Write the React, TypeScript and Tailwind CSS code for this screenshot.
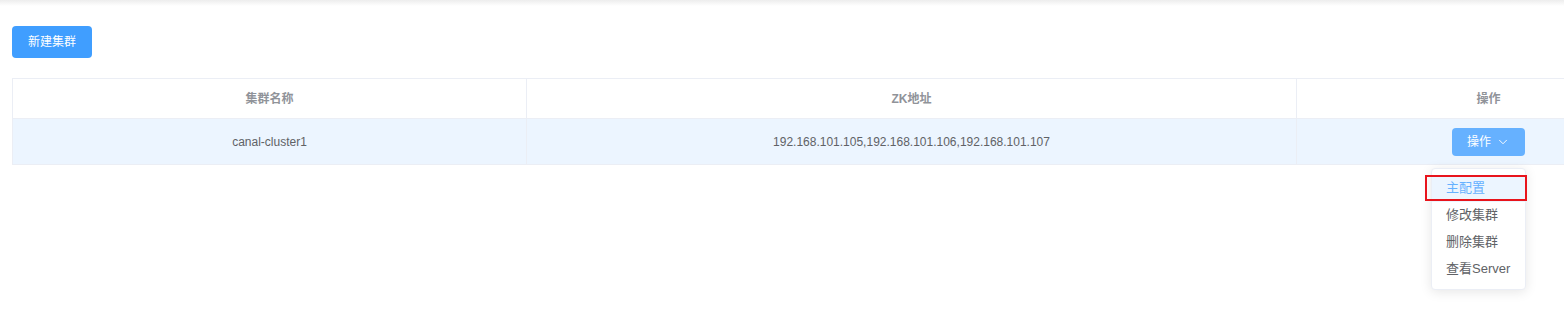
import { ChevronDown } from "lucide-react"

const font = { fontFamily: '"Liberation Sans", "Noto Sans CJK SC", sans-serif' }

const menuItems = ["主配置", "修改集群", "删除集群", "查看Server"]

function ActionDropdown() {
  return (
    <div className="absolute left-[1431px] top-[168px] w-[95px] rounded bg-white border border-[#ebeef5] shadow-[0_2px_12px_0_rgba(0,0,0,0.1)] py-[6px]">
      {menuItems.map((item, idx) => (
        <div
          key={item}
          className={`h-[27px] leading-[26px] px-[14px] text-[13px] whitespace-nowrap ${idx === 0 ? 'bg-[#ecf5ff] text-[#66b1ff]' : 'text-[#606266]'}`}
        >
          {item}
        </div>
      ))}
      {/* 标注框 */}
      <div className="absolute left-[-7px] top-[6px] w-[102px] h-[26px] border-2 border-[#e8141c] pointer-events-none" />
    </div>
  )
}

export default function App() {
  return (
    <div className="relative w-[1564px] h-[319px] overflow-hidden bg-white" style={font}>
      <div className="h-[6px] bg-gradient-to-b from-[#ededed] to-white" />

      <div className="pl-3 pt-5">
        <button className="h-8 w-20 rounded bg-[#409eff] text-white text-xs">新建集群</button>
      </div>

      <div className="pl-3 pt-5">
        <table className="w-[1668px] table-fixed border-collapse border border-[#ebeef5] text-xs">
          <colgroup>
            <col className="w-[514px]" />
            <col className="w-[770px]" />
            <col className="w-[384px]" />
          </colgroup>
          <thead>
            <tr className="h-[40px] border-b border-[#ebeef5]">
              <th className="text-center font-bold text-[#909399] border-r border-[#ebeef5]">集群名称</th>
              <th className="text-center font-bold text-[#909399] border-r border-[#ebeef5]">ZK地址</th>
              <th className="text-center font-bold text-[#909399]">操作</th>
            </tr>
          </thead>
          <tbody>
            <tr className="h-[46px] bg-[#ecf5ff] border-b border-[#ebeef5]">
              <td className="text-center text-[#606266] border-r border-[#ebeef5]">canal-cluster1</td>
              <td className="text-center text-[#606266] border-r border-[#ebeef5]">192.168.101.105,192.168.101.106,192.168.101.107</td>
              <td className="text-center">
                <button className="inline-flex items-center justify-center gap-[5px] h-7 w-[73px] rounded bg-[#66b1ff] text-white text-xs">
                  操作
                  <ChevronDown className="w-[14px] h-[14px]" strokeWidth={1.6} />
                </button>
              </td>
            </tr>
          </tbody>
        </table>
      </div>

      <ActionDropdown />
    </div>
  )
}
